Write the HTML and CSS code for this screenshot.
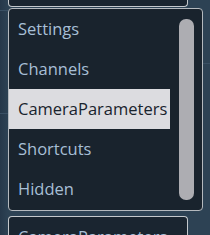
FILE: index.html
```html
<!DOCTYPE html>
<html lang="en">
<head>
    <meta charset="UTF-8">
    <title>Parameters menu</title>
    <link rel="stylesheet" href="styles.css">
</head>
<body>
    <div class="page">
        <div class="field field-top"></div>

        <div class="menu">
            <ul class="menu-list">
                <li class="menu-item">Settings</li>
                <li class="menu-item">Channels</li>
                <li class="menu-item selected">CameraParameters</li>
                <li class="menu-item">Shortcuts</li>
                <li class="menu-item">Hidden</li>
            </ul>
            <div class="scroll-track">
                <div class="scroll-thumb"></div>
            </div>
        </div>

        <div class="field field-bottom">CameraParameters</div>
    </div>
</body>
</html>
```

FILE: styles.css
```css
* {
    margin: 0;
    padding: 0;
    box-sizing: border-box;
}

html, body {
    height: 100%;
    overflow: hidden;
}

body {
    background: #2d4254;
    font-family: "Open Sans", "Noto Sans", sans-serif;
}

.page {
    padding-left: 8px;
    background:
        linear-gradient(#3a5064, #3a5064) 0 10px / 8px 1px no-repeat,
        linear-gradient(#3a5064, #3a5064) 0 113px / 8px 1px no-repeat,
        linear-gradient(#3a5064, #3a5064) 203px 63px / 7px 1px no-repeat,
        linear-gradient(90deg, #26384a 0, #2d4254 8px);
    height: 100%;
}

.field {
    width: 180px;
    background: #1a2530;
    border: 1px solid #c4c8cc;
    color: #a7bfd6;
    font-size: 16.5px;
}

.field-top {
    height: 7px;
    border-top: none;
    border-radius: 0 0 4px 4px;
}

.field-bottom {
    margin-top: 5px;
    height: 40px;
    border-bottom: none;
    border-radius: 4px 4px 0 0;
    padding: 9px 9px 0;
    line-height: 22px;
}

.menu {
    margin-top: 1px;
    width: 195px;
    height: 203px;
    display: flex;
    background: #19232d;
    border: 1px solid #b4b9be;
    border-radius: 4px;
}

.menu-list {
    list-style: none;
    width: 161px;
}

.menu-item {
    height: 40px;
    line-height: 40px;
    padding-left: 9px;
    font-size: 16.5px;
    color: #a7bfd6;
    white-space: nowrap;
}

.menu-item.selected {
    background: #dcdce0;
    color: #19232d;
}

.scroll-track {
    flex: 1;
    padding: 10px 8px 10px 9px;
}

.scroll-thumb {
    height: 100%;
    background: #adadb2;
    border-radius: 7px;
}
```
